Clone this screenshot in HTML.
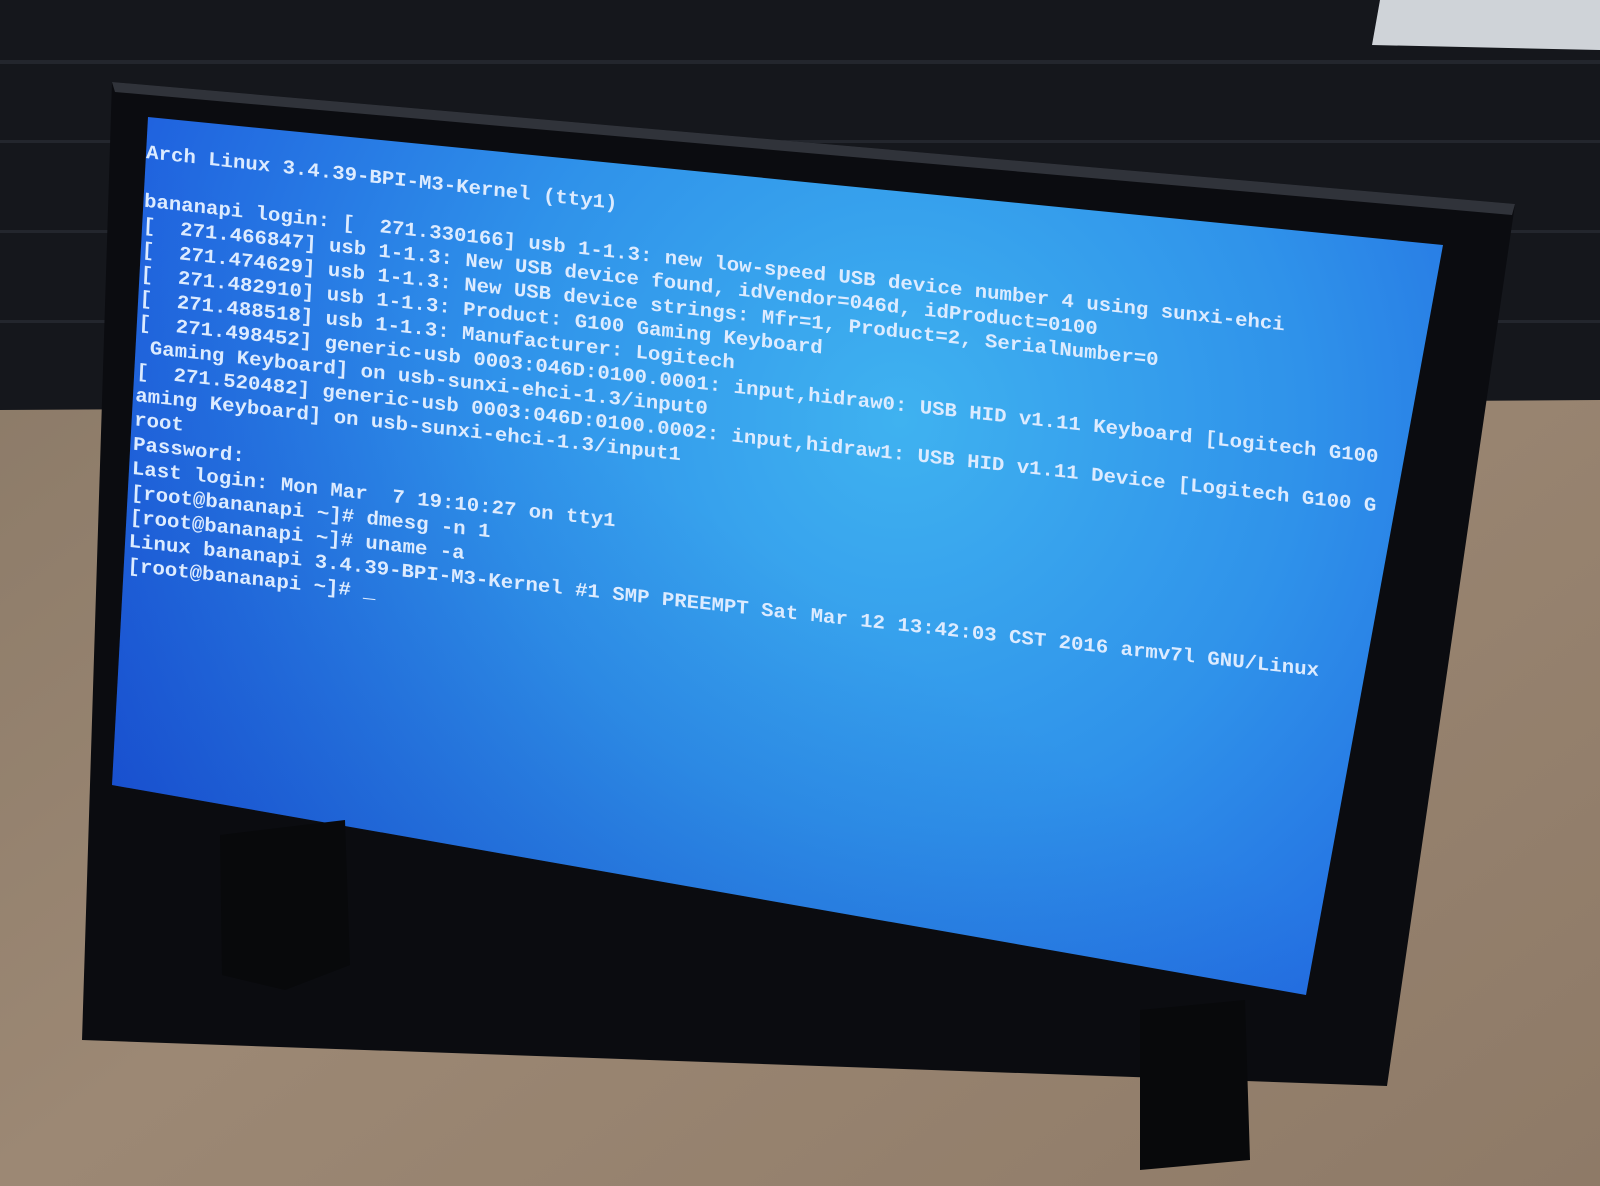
<!DOCTYPE html>
<html><head><meta charset="utf-8"><style>
html,body{margin:0;padding:0;width:1600px;height:1186px;overflow:hidden;background:#16181d}
svg{display:block}
text{font-family:"Liberation Mono","DejaVu Sans Mono",monospace;font-size:19.5px;fill:#dcebff;font-weight:bold;white-space:pre}
</style></head><body>
<svg width="1600" height="1186" viewBox="0 0 1600 1186" xmlns="http://www.w3.org/2000/svg">
<defs>
<linearGradient id="desk" x1="0" y1="0" x2="1" y2="1">
<stop offset="0" stop-color="#857563"/><stop offset="0.5" stop-color="#9c8874"/><stop offset="1" stop-color="#8e7a67"/>
</linearGradient>
<radialGradient id="scr" cx="900" cy="420" r="900" gradientUnits="userSpaceOnUse">
<stop offset="0" stop-color="#3fb2f0"/><stop offset="0.45" stop-color="#2f92ea"/><stop offset="1" stop-color="#1c58dc"/>
</radialGradient>
<linearGradient id="scr2" x1="1" y1="0" x2="0" y2="1">
<stop offset="0.5" stop-color="#0a2aa0" stop-opacity="0"/><stop offset="1" stop-color="#0a2aa0" stop-opacity="0.3"/>
</linearGradient>
</defs>
<rect width="1600" height="1186" fill="url(#desk)"/>
<polygon points="0,0 1600,0 1600,400 0,410" fill="#15171c"/>
<g fill="#23262d">
<rect x="0" y="60" width="1600" height="4"/>
<rect x="0" y="140" width="1600" height="3"/>
<rect x="0" y="230" width="1600" height="3"/>
<rect x="0" y="320" width="1600" height="3"/>
</g>
<polygon points="1380,0 1600,0 1600,50 1372,45" fill="#cfd3d8"/>
<polygon points="112,82 1515,204 1387,1086 82,1040" fill="#0b0c10"/>
<polygon points="112,82 1515,204 1512,215 115,92" fill="#30333a"/>
<polygon points="148,117 1443,245 1306,995 112,785" fill="url(#scr)"/>
<polygon points="148,117 1443,245 1306,995 112,785" fill="url(#scr2)"/>
<polygon points="220,835 345,820 350,965 285,990 222,975" fill="#08090b"/>
<polygon points="1140,1010 1245,1000 1250,1160 1140,1170" fill="#08090b"/>
<g transform="matrix(1.06,0.115,-0.045,1,146,158)">
<text x="0" y="0">Arch Linux 3.4.39-BPI-M3-Kernel (tty1)</text>
<text x="0" y="48.6">bananapi login: [  271.330166] usb 1-1.3: new low-speed USB device number 4 using sunxi-ehci</text>
<text x="0" y="72.9">[  271.466847] usb 1-1.3: New USB device found, idVendor=046d, idProduct=0100</text>
<text x="0" y="97.2">[  271.474629] usb 1-1.3: New USB device strings: Mfr=1, Product=2, SerialNumber=0</text>
<text x="0" y="121.5">[  271.482910] usb 1-1.3: Product: G100 Gaming Keyboard</text>
<text x="0" y="145.8">[  271.488518] usb 1-1.3: Manufacturer: Logitech</text>
<text x="0" y="170.1">[  271.498452] generic-usb 0003:046D:0100.0001: input,hidraw0: USB HID v1.11 Keyboard [Logitech G100</text>
<text x="0" y="194.4"> Gaming Keyboard] on usb-sunxi-ehci-1.3/input0</text>
<text x="0" y="218.7">[  271.520482] generic-usb 0003:046D:0100.0002: input,hidraw1: USB HID v1.11 Device [Logitech G100 G</text>
<text x="0" y="243">aming Keyboard] on usb-sunxi-ehci-1.3/input1</text>
<text x="0" y="267.3">root</text>
<text x="0" y="291.6">Password:</text>
<text x="0" y="315.9">Last login: Mon Mar  7 19:10:27 on tty1</text>
<text x="0" y="340.2">[root@bananapi ~]# dmesg -n 1</text>
<text x="0" y="364.5">[root@bananapi ~]# uname -a</text>
<text x="0" y="388.8">Linux bananapi 3.4.39-BPI-M3-Kernel #1 SMP PREEMPT Sat Mar 12 13:42:03 CST 2016 armv7l GNU/Linux</text>
<text x="0" y="413.1">[root@bananapi ~]# _</text>
</g>
</svg>
</body></html>
